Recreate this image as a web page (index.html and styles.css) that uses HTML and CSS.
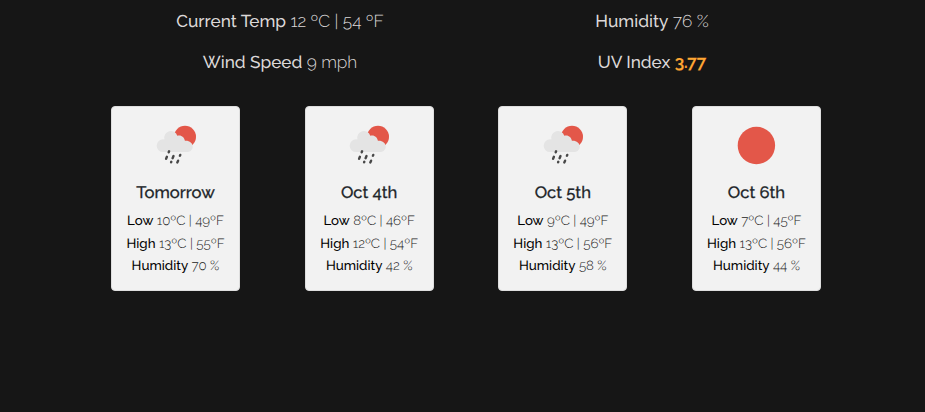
FILE: index.html
```html
<!DOCTYPE html>
<html lang="en">
<head>
<meta charset="utf-8">
<title>Weather forecast</title>
<link rel="stylesheet" href="styles.css">
</head>
<body>
<svg class="defs" width="0" height="0" aria-hidden="true">
  <symbol id="rain" viewBox="0 0 42 42">
    <circle cx="30" cy="11.700" r="11" fill="#e35749"/>
    <path d="M8 27A6.350 6.350 0 0 1 8 14.300L9.500 14.400A6.600 6.600 0 0 1 22.300 10.800C25.800 9.400 29.400 12 29.900 15.800C34.300 15.400 37.700 18 37.700 21.600C37.700 24.700 35.500 27 32.700 27Z" fill="#e4e4e4"/>
    <path d="M14.100 26.300l-.4 1M11.900 31.800l-.8 2M18.500 31l-.9 2.200M16.300 36.800l-.2.500M25.300 29.900l-.4.800M23.100 35.700l-.8 1.800" stroke="#484848" stroke-width="2.400" stroke-linecap="round" fill="none"/>
  </symbol>
  <symbol id="sun" viewBox="0 0 42 42"><circle cx="21.400" cy="20.500" r="18.700" fill="#e35749"/></symbol>
</svg>
<main class="weather">
  <section class="current">
    <p><b>Current Temp</b> <span>12 ºC | 54 ºF</span></p>
    <p><b>Humidity</b> <span>76 %</span></p>
    <p><b>Wind Speed</b> <span>9 mph</span></p>
    <p><b>UV Index</b> <strong>3.77</strong></p>
  </section>
  <section class="forecast">
    <article class="card">
      <svg class="icon"><use href="#rain"/></svg>
      <h2>Tomorrow</h2>
      <p><b>Low</b> <span>10ºC | 49ºF</span></p>
      <p><b>High</b> <span>13ºC | 55ºF</span></p>
      <p><b>Humidity</b> <span>70 %</span></p>
    </article>
    <article class="card">
      <svg class="icon"><use href="#rain"/></svg>
      <h2>Oct 4th</h2>
      <p><b>Low</b> <span>8ºC | 46ºF</span></p>
      <p><b>High</b> <span>12ºC | 54ºF</span></p>
      <p><b>Humidity</b> <span>42 %</span></p>
    </article>
    <article class="card">
      <svg class="icon"><use href="#rain"/></svg>
      <h2>Oct 5th</h2>
      <p><b>Low</b> <span>9ºC | 49ºF</span></p>
      <p><b>High</b> <span>13ºC | 56ºF</span></p>
      <p><b>Humidity</b> <span>58 %</span></p>
    </article>
    <article class="card">
      <svg class="icon"><use href="#sun"/></svg>
      <h2>Oct 6th</h2>
      <p><b>Low</b> <span>7ºC | 45ºF</span></p>
      <p><b>High</b> <span>13ºC | 56ºF</span></p>
      <p><b>Humidity</b> <span>44 %</span></p>
    </article>
  </section>
</main>
</body>
</html>
```
FILE: styles.css
```css
* { box-sizing: border-box; }
body {
  margin: 0;
  background: #161616;
  font-family: Raleway, Lato, "Open Sans", sans-serif;
  text-rendering: geometricPrecision;
}
p, h2 { margin: 0; white-space: nowrap; }
.defs { display: block; }
.weather { width: 744px; margin-left: 94px; }
.current {
  display: grid;
  grid-template-columns: 1fr 1fr;
  grid-auto-rows: 41px;
  padding-top: 2px;
  text-align: center;
  font-size: 17.200px;
  line-height: 41px;
  color: #dcd8d8;
}
.current b { font-weight: 500; }
.current span { font-weight: 300; }
.current strong { font-weight: 600; color: #ffa733; -webkit-text-stroke: .2px #ffa733; }
.forecast { display: flex; justify-content: space-between; padding: 22px 17px 0; }
.card {
  width: 129px;
  height: 185px;
  padding-top: 18px;
  border: 1px solid #dedede;
  border-radius: 4px;
  background: #f2f2f2;
  color: #000;
  text-align: center;
  font-size: 13.300px;
  line-height: 22.500px;
}
.icon { display: block; width: 42px; height: 42px; margin: 0 auto 15px; }
.card h2 {
  margin-bottom: 8px;
  font-size: 16.600px;
  line-height: 20px;
  font-weight: 500;
  color: #212529;
  -webkit-text-stroke: .25px #212529;
}
.card b { font-weight: 500; }
.card span { font-weight: 300; color: #222; }
```
